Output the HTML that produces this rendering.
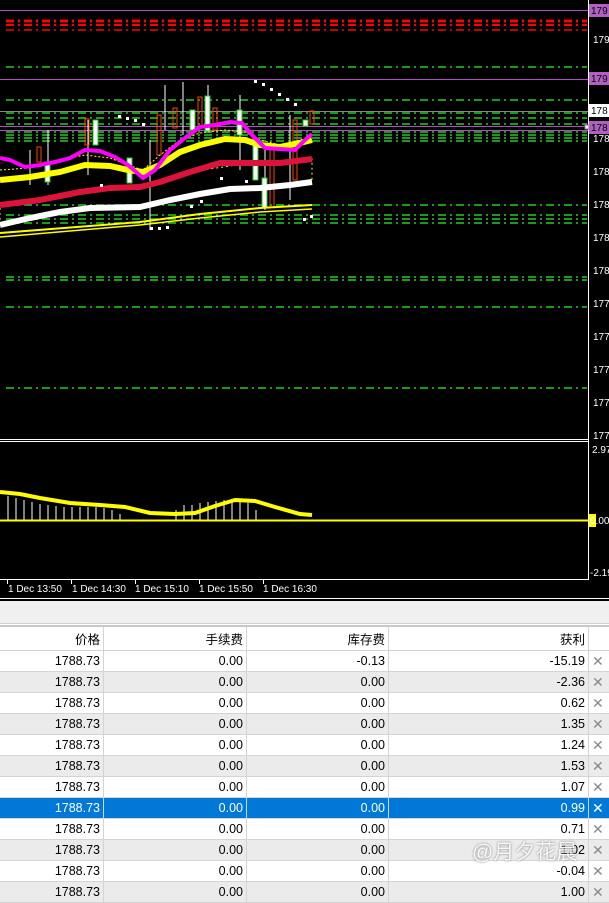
<!DOCTYPE html><html><head><meta charset="utf-8"><style>
body{margin:0;width:609px;height:889px;overflow:hidden;background:#fff;font-family:"Liberation Sans","Noto Sans CJK SC",sans-serif}
#c{position:absolute;left:0;top:0}
.bar{position:absolute;left:0;top:601px;width:609px;height:22px;background:#f0f0f0;border-bottom:1px solid #d0d0d0}
table{position:absolute;left:0;top:625px;border-collapse:collapse;font-size:12.5px;color:#000}
td{height:20px;padding:0 3px 0 0;text-align:right;border-right:1px solid #d4d4d4;border-bottom:1px solid #d4d4d4;white-space:nowrap}
tr.h td{height:23px;border-top:2px solid #c8c8c8}
tr.g td{background:#ebebeb}
tr.s td{background:#0078d7;color:#fff}
td.x{color:#888;font-size:14px;text-align:left;padding-left:3px;border-right:none;width:14px}
.wm{position:absolute;left:472px;top:836px;color:rgba(255,255,255,.9);font-size:21px;text-shadow:0 0 2px #777}
</style></head><body>
<svg id="c" width="609" height="601" font-family="Liberation Sans" font-size="10">
<rect width="609" height="601" fill="#000"/>
<g stroke-dasharray="8,4,2,4" fill="none">
<line x1="6" y1="21" x2="587" y2="21" stroke="#f00" stroke-width="3"/>
<line x1="6" y1="25" x2="587" y2="25" stroke="#f00" stroke-width="2"/>
<line x1="6" y1="30" x2="587" y2="30" stroke="#f00" stroke-width="1.5"/>
<g stroke="#2c2" stroke-width="1.5">
<line x1="6" y1="67" x2="587" y2="67"/><line x1="6" y1="100" x2="587" y2="100"/>
<line x1="6" y1="113" x2="587" y2="113"/><line x1="6" y1="118" x2="587" y2="118"/>
<line x1="6" y1="124" x2="587" y2="124"/><line x1="6" y1="132" x2="587" y2="132"/>
<line x1="6" y1="135" x2="587" y2="135"/><line x1="6" y1="138" x2="587" y2="138"/>
<line x1="6" y1="141" x2="587" y2="141"/><line x1="6" y1="205" x2="587" y2="205"/>
<line x1="6" y1="215" x2="587" y2="215"/><line x1="6" y1="219" x2="587" y2="219"/>
<line x1="6" y1="223" x2="587" y2="223"/><line x1="6" y1="277" x2="587" y2="277"/>
<line x1="6" y1="280" x2="587" y2="280"/><line x1="6" y1="307" x2="587" y2="307"/>
<line x1="6" y1="388" x2="587" y2="388"/></g></g>
<g stroke="#b050c0" stroke-width="1"><line x1="0" y1="10.5" x2="588" y2="10.5"/><line x1="0" y1="79.5" x2="588" y2="79.5"/><line x1="0" y1="126.5" x2="588" y2="126.5"/><line x1="0" y1="130.5" x2="588" y2="130.5"/></g>
<line x1="0" y1="111.5" x2="588" y2="111.5" stroke="#888"/>
<g stroke="#fff" stroke-width="1">
<line x1="30" y1="150" x2="30" y2="185"/><line x1="48" y1="130" x2="48" y2="185"/><line x1="88" y1="120" x2="88" y2="175"/><line x1="150" y1="140" x2="150" y2="230"/><line x1="165" y1="85" x2="165" y2="130"/><line x1="183" y1="82" x2="183" y2="135"/><line x1="208" y1="85" x2="208" y2="130"/><line x1="240" y1="95" x2="240" y2="170"/><line x1="265" y1="145" x2="265" y2="210"/><line x1="290" y1="115" x2="290" y2="200"/></g>
<g fill="#fff" stroke="#2c2"><rect x="45" y="162" width="5" height="20"/><rect x="93" y="120" width="5" height="25"/><rect x="127" y="158" width="5" height="25"/><rect x="190" y="110" width="5" height="20"/><rect x="205" y="96" width="5" height="35"/><rect x="237" y="110" width="5" height="25"/><rect x="253" y="140" width="5" height="40"/><rect x="262" y="178" width="5" height="30"/><rect x="303" y="120" width="5" height="6"/></g>
<g fill="none" stroke="#f40"><rect x="37" y="147" width="4" height="15"/><rect x="85" y="119" width="4" height="26"/><rect x="157" y="115" width="4" height="40"/><rect x="173" y="108" width="4" height="20"/><rect x="198" y="97" width="4" height="30"/><rect x="213" y="108" width="4" height="22"/><rect x="270" y="145" width="4" height="62"/><rect x="293" y="120" width="4" height="60"/><rect x="310" y="111" width="4" height="13"/></g>
<polyline fill="none" stroke="#ff0" stroke-width="6" points="0,180 30,177 60,172 85,165 110,166 128,170 143,172 160,165 180,152 200,145 225,139 245,140 260,145 280,147 300,143 312,140"/>
<polyline fill="none" stroke="#ff0" stroke-width="1" stroke-dasharray="2,2" points="0,170 30,168 60,160 85,155 110,158 128,165 143,170 160,155 180,140 200,133 225,130 245,132 260,140 280,145 312,137"/>
<polygon fill="none" stroke="#ff0" stroke-dasharray="2,3" points="0,205 80,192 140,187 190,172 250,163 312,159 312,182 260,188 200,194 140,207 60,212 0,225"/>
<polyline fill="none" stroke="#f0f" stroke-width="4" points="0,158 10,160 25,167 40,165 55,162 70,158 85,150 100,151 115,157 128,165 143,178 155,170 170,150 185,138 200,127 215,125 230,122 242,123 252,135 265,148 280,149 295,150 305,140 312,134"/>
<polyline fill="none" stroke="#dc143c" stroke-width="6" points="0,205 40,200 80,192 110,188 140,187 160,182 190,172 220,163 250,163 280,163 312,159"/>
<polyline fill="none" stroke="#fff" stroke-width="6" points="0,225 30,218 60,212 90,208 140,207 170,200 200,194 230,189 260,188 290,185 312,182"/>
<polyline fill="none" stroke="#ff0" stroke-width="2" points="0,233 140,222 200,214 260,208 312,205"/>
<polyline fill="none" stroke="#ff0" stroke-width="1.5" points="0,237 140,225 200,218 260,212 312,209"/>
<g fill="#fff"><rect x="254" y="80" width="3" height="3"/><rect x="262" y="83" width="3" height="3"/><rect x="270" y="88" width="3" height="3"/><rect x="278" y="93" width="3" height="3"/><rect x="286" y="98" width="3" height="3"/><rect x="294" y="103" width="3" height="3"/><rect x="118" y="115" width="3" height="3"/><rect x="126" y="117" width="3" height="3"/><rect x="134" y="119" width="3" height="3"/><rect x="142" y="123" width="3" height="3"/><rect x="150" y="227" width="3" height="3"/><rect x="158" y="227" width="3" height="3"/><rect x="166" y="226" width="3" height="3"/><rect x="303" y="218" width="3" height="3"/><rect x="310" y="215" width="3" height="3"/><rect x="100" y="184" width="3" height="3"/><rect x="220" y="177" width="3" height="3"/><rect x="245" y="180" width="3" height="3"/><rect x="190" y="205" width="3" height="3"/><rect x="200" y="200" width="3" height="3"/></g>
<line x1="588.5" y1="0" x2="588.5" y2="580" stroke="#fff"/>
<line x1="0" y1="439.5" x2="588" y2="439.5" stroke="#fff"/><line x1="0" y1="441.5" x2="588" y2="441.5" stroke="#fff"/>
<line x1="0" y1="579.5" x2="589" y2="579.5" stroke="#fff"/>
<line x1="0" y1="520.5" x2="588" y2="520.5" stroke="#ff0" stroke-width="2"/>
<g stroke="#fff">
<line x1="8" y1="520" x2="8" y2="496"/><line x1="16" y1="520" x2="16" y2="498"/><line x1="24" y1="520" x2="24" y2="500"/><line x1="32" y1="520" x2="32" y2="502"/><line x1="40" y1="520" x2="40" y2="504"/><line x1="48" y1="520" x2="48" y2="505"/><line x1="56" y1="520" x2="56" y2="506"/><line x1="64" y1="520" x2="64" y2="507"/><line x1="72" y1="520" x2="72" y2="507"/><line x1="80" y1="520" x2="80" y2="507"/><line x1="88" y1="520" x2="88" y2="507"/><line x1="96" y1="520" x2="96" y2="507"/><line x1="104" y1="520" x2="104" y2="508"/><line x1="112" y1="520" x2="112" y2="510"/><line x1="120" y1="520" x2="120" y2="514"/><line x1="176" y1="520" x2="176" y2="510"/><line x1="184" y1="520" x2="184" y2="505"/><line x1="192" y1="520" x2="192" y2="505"/><line x1="200" y1="520" x2="200" y2="503"/><line x1="208" y1="520" x2="208" y2="502"/><line x1="216" y1="520" x2="216" y2="501"/><line x1="224" y1="520" x2="224" y2="500"/><line x1="232" y1="520" x2="232" y2="500"/><line x1="240" y1="520" x2="240" y2="500"/><line x1="248" y1="520" x2="248" y2="503"/><line x1="256" y1="520" x2="256" y2="510"/></g>
<polyline fill="none" stroke="#ff0" stroke-width="4" points="0,492 20,494 40,498 70,503 100,505 125,507 150,513 175,514 195,513 215,506 235,500 255,501 275,507 300,514 312,515"/>
<g fill="#fff">
<text x="593" y="43">179</text><text x="593" y="142">178</text><text x="593" y="175">178</text><text x="593" y="208">178</text><text x="593" y="241">178</text><text x="593" y="274">178</text><text x="593" y="307">177</text><text x="593" y="340">177</text><text x="593" y="373">177</text><text x="593" y="406">177</text><text x="593" y="439">177</text><text x="592" y="453">2.97</text><text x="590" y="576">-2.19</text>
<text x="8" y="592">1 Dec 13:50</text><text x="72" y="592">1 Dec 14:30</text><text x="135" y="592">1 Dec 15:10</text><text x="199" y="592">1 Dec 15:50</text><text x="263" y="592">1 Dec 16:30</text></g>
<g stroke="#fff"><line x1="7.5" y1="580" x2="7.5" y2="584"/><line x1="71.5" y1="580" x2="71.5" y2="584"/><line x1="135.5" y1="580" x2="135.5" y2="584"/><line x1="199.5" y1="580" x2="199.5" y2="584"/><line x1="263.5" y1="580" x2="263.5" y2="584"/></g>
<rect x="589" y="4" width="20" height="13" fill="#b060c0"/><text x="591" y="14" fill="#000">179</text>
<rect x="589" y="72" width="20" height="13" fill="#b060c0"/><text x="591" y="82" fill="#000">179</text>
<rect x="589" y="104" width="20" height="13" fill="#fff"/><text x="591" y="114" fill="#000">178</text>
<rect x="589" y="121" width="20" height="13" fill="#b060c0"/><text x="591" y="131" fill="#000">178</text>
<rect x="585" y="125" width="4" height="4" fill="#fff" stroke="#b060c0"/>
<rect x="589" y="514" width="7" height="13" fill="#ff0"/><text x="590" y="524" fill="#fff">0.00</text>
<line x1="0" y1="598.5" x2="609" y2="598.5" stroke="#fff"/>
</svg>
<div class="bar"></div>
<table>
<tr class="h"><td style="width:100px">价格</td><td style="width:139px">手续费</td><td style="width:138px">库存费</td><td style="width:196px">获利</td><td class="x"></td></tr>
<tr><td>1788.73</td><td>0.00</td><td>-0.13</td><td>-15.19</td><td class="x">✕</td></tr>
<tr class="g"><td>1788.73</td><td>0.00</td><td>0.00</td><td>-2.36</td><td class="x">✕</td></tr>
<tr><td>1788.73</td><td>0.00</td><td>0.00</td><td>0.62</td><td class="x">✕</td></tr>
<tr class="g"><td>1788.73</td><td>0.00</td><td>0.00</td><td>1.35</td><td class="x">✕</td></tr>
<tr><td>1788.73</td><td>0.00</td><td>0.00</td><td>1.24</td><td class="x">✕</td></tr>
<tr class="g"><td>1788.73</td><td>0.00</td><td>0.00</td><td>1.53</td><td class="x">✕</td></tr>
<tr><td>1788.73</td><td>0.00</td><td>0.00</td><td>1.07</td><td class="x">✕</td></tr>
<tr class="s"><td>1788.73</td><td>0.00</td><td>0.00</td><td>0.99</td><td class="x">✕</td></tr>
<tr><td>1788.73</td><td>0.00</td><td>0.00</td><td>0.71</td><td class="x">✕</td></tr>
<tr class="g"><td>1788.73</td><td>0.00</td><td>0.00</td><td>1.02</td><td class="x">✕</td></tr>
<tr><td>1788.73</td><td>0.00</td><td>0.00</td><td>-0.04</td><td class="x">✕</td></tr>
<tr class="g"><td>1788.73</td><td>0.00</td><td>0.00</td><td>1.00</td><td class="x">✕</td></tr>
</table>
<div class="wm">@月夕花晨</div>
</body></html>
